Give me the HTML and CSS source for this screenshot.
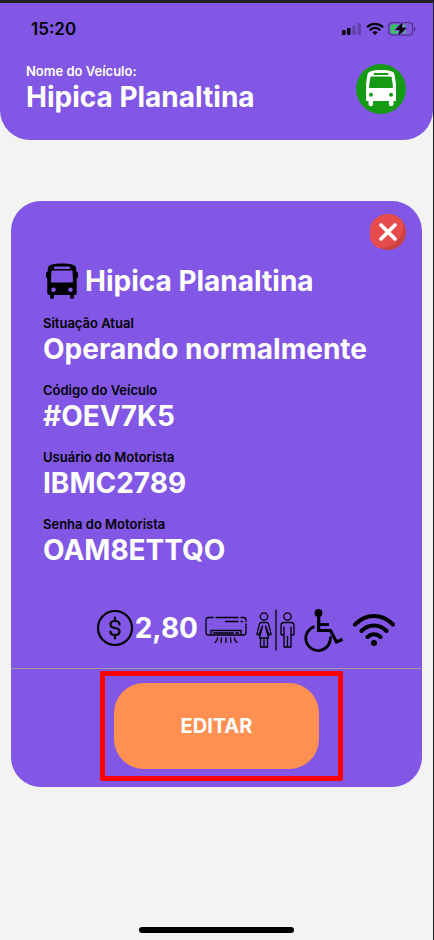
FILE: index.html
```html
<!DOCTYPE html>
<html lang="pt-BR">
<head>
<meta charset="utf-8">
<meta name="viewport" content="width=device-width, initial-scale=1">
<title>Hipica Planaltina</title>
<link rel="stylesheet" href="styles.css">
</head>
<body>
<div class="screen">
  <header class="header">
    <div class="status">
      <time class="clock">15:20</time>
      <svg class="status-icons" viewBox="0 0 74 14" aria-hidden="true">
        <rect x="0" y="8" width="3.6" height="5" rx="1"/>
        <rect x="5" y="6" width="3.6" height="7" rx="1"/>
        <rect x="10.200" y="3.500" width="3.600" height="9.500" rx="1" opacity=".25"/>
        <rect x="15.400" y="1" width="3.600" height="12" rx="1" opacity=".25"/>
        <g fill="none" stroke="#000" stroke-width="2.300">
          <path d="M25 5.200C29.500 .7 36.500 .7 41 5.200"/>
          <path d="M27.800 8.200C30.800 5.200 35.200 5.200 38.200 8.200"/>
        </g>
        <path d="M33 13 30.300 10.200C31.800 8.800 34.200 8.800 35.700 10.200Z"/>
        <rect x="46.700" y=".7" width="24" height="12.400" rx="3.500" fill="none" stroke="#000" stroke-opacity=".4" stroke-width="1.200"/>
        <path d="M72 5v4.200c2-.8 2-3.400 0-4.200Z" opacity=".45"/>
        <rect x="48.500" y="2.500" width="15.500" height="9" rx="2" fill="#34c759"/>
        <path class="bolt" d="M60.700 0 53.200 8h4.500L56.300 14 64.600 5.800h-4.800Z"/>
      </svg>
    </div>
    <div class="vehicle">
      <div>
        <p class="label">Nome do Veículo:</p>
        <h1 class="value">Hipica Planaltina</h1>
      </div>
      <svg class="avatar" viewBox="0 0 50 50" aria-hidden="true">
        <circle cx="25" cy="25" r="25" fill="#159a15"/>
        <path fill="#fff" fill-rule="evenodd" d="M10 37V20l1.500-9.500C12 7.500 16 6 25 6s13 1.500 13.500 4.500L40 20v17h-2.500v3a2.300 2.300 0 0 1-4.600 0v-3H17.100v3a2.300 2.300 0 0 1-4.600 0v-3ZM18.500 9a1 1 0 0 0 0 2h13a1 1 0 0 0 0-2ZM15.500 12.500q-1 0-1.200 1L13 22.500q-.1 1.500 1.200 1.500h21.600q1.300 0 1.200-1.500l-1.300-9q-.2-1-1.200-1ZM15 28.800a2 2 0 1 0 0 4 2 2 0 0 0 0-4ZM35 28.800a2 2 0 1 0 0 4 2 2 0 0 0 0-4Z"/>
      </svg>
    </div>
  </header>

  <main class="main">
    <section class="card">
      <button class="close" type="button" aria-label="Fechar">
        <svg viewBox="0 0 36 36" aria-hidden="true">
          <circle cx="18" cy="18" r="18" fill="#cb4141"/>
          <path d="M18 0a18 18 0 0 1 14.500 7.300C36 19 27 35 8 34A18 18 0 0 1 8 3 18 18 0 0 1 18 0Z" fill="#e64c4c"/>
          <path d="M11 11 25 25M25 11 11 25" stroke="#fff" stroke-width="3.800" stroke-linecap="round"/>
        </svg>
      </button>

      <div class="details">
        <div class="title">
          <svg class="bus" viewBox="0 0 34 36" aria-hidden="true">
            <path fill-rule="evenodd" d="M2.500 9 3 5C3.500 1.500 9 .5 17 .5S30.500 1.500 31 5l.5 4c1 0 1.500.6 1.500 1.500v3c0 1-.5 1.700-1.300 1.700V30q0 2-2 2H29v2a2 2 0 0 1-4 0v-2H9v2a2 2 0 0 1-4 0v-2h-.7q-2 0-2-2V15.200C1.500 15.200 1 14.500 1 13.500v-3C1 9.600 1.500 9 2.500 9ZM10 3.500q-1 0-1 1V6h16V4.500q0-1-1-1ZM7.500 7.500q-1 0-1.100 1L6 18.500q0 1 1 1h20q1 0 1-1l-.4-10q-.1-1-1.100-1ZM8.500 24.500a2.300 2.300 0 1 0 0 4.600 2.300 2.300 0 0 0 0-4.600ZM25.500 24.500a2.300 2.300 0 1 0 0 4.600 2.300 2.300 0 0 0 0-4.600Z"/>
          </svg>
          <h2 class="value">Hipica Planaltina</h2>
        </div>
        <dl class="fields">
          <div><dt class="label">Situação Atual</dt><dd class="value">Operando normalmente</dd></div>
          <div><dt class="label">Código do Veículo</dt><dd class="value">#OEV7K5</dd></div>
          <div><dt class="label">Usuário do Motorista</dt><dd class="value">IBMC2789</dd></div>
          <div><dt class="label">Senha do Motorista</dt><dd class="value">OAM8ETTQO</dd></div>
        </dl>
      </div>

      <div class="amenities">
        <div class="fare">
          <svg class="coin" viewBox="0 0 38 38" fill="none" stroke="#000" stroke-width="2.200" stroke-linecap="round" aria-hidden="true">
            <circle cx="19" cy="19" r="17"/>
            <path d="M19 8.500v3.500M19 26v3.500M23.500 15.500c0-2.200-1.800-3.500-4.500-3.500s-4.500 1.300-4.500 3.500S16.300 18.700 19 19s4.500 1.300 4.500 3.500S21.700 26 19 26s-4.500-1.300-4.500-3.500"/>
          </svg>
          <span class="value">2,80</span>
        </div>
        <svg class="ac" viewBox="0 0 42 28" fill="none" stroke="#000" stroke-width="1.300" stroke-linecap="round" aria-label="Ar-condicionado" role="img">
          <path d="M8 1.500H3.500Q1 1.500 1 4v12.500Q1 19 3.500 19h35Q41 19 41 16.500V8M11 1.500h22M36 1.500h2.500Q41 1.500 41 4v1.500M20.500 5.500H33M36 5.500h1.500M6 19v-4.500h30V19M8.500 17h20M31 17h2.500M12.500 22c0 2-1 3.500-2.500 4.500M16.500 22l-.5 4.500M21 22v4.500M25.500 22l.5 4.500M29.500 22c0 2 1 3.500 2.500 4.500"/>
        </svg>
        <svg class="wc" viewBox="0 0 39 42" fill="none" stroke="#000" stroke-width="1.300" stroke-linejoin="round" aria-label="Banheiro" role="img">
          <circle cx="8" cy="7.500" r="3.700"/>
          <path d="M5 13.500h6q1 0 1.400 1.200l2.600 10q.2 1.300-1 1.300l-1-.5L9.500 17 12.500 29h-9L6.500 17 3 25.500l-1 .5q-1.200 0-1-1.300l2.600-10Q4 13.500 5 13.500ZM4.500 29v9h7v-9M8 29v9"/>
          <path d="M20 .5v41"/>
          <circle cx="31.500" cy="7.500" r="3.700"/>
          <path d="M28 13.500h7q3 0 3 3V25q0 1-1 1h-2v12h-7V26h-2q-1 0-1-1v-8.500q0-3 3-3ZM28 17.500V26M35 17.500V26M31.500 27v11"/>
        </svg>
        <svg class="wheelchair" viewBox="0 0 40 44" fill="none" stroke="#000" stroke-width="3" aria-label="Acessível para cadeirantes" role="img">
          <circle cx="14.500" cy="5" r="3.900" fill="#000" stroke="none"/>
          <path d="M14.700 7v15.500h11.800L32.500 34l6-2.700" stroke-width="3.200"/>
          <path d="M15 16.500h10" stroke-width="2.800"/>
          <path d="M10.500 18.500A12.300 12.300 0 1 0 26.300 28.500" stroke-width="2.800"/>
        </svg>
        <svg class="wifi" viewBox="0 0 42 34" fill="none" stroke="#000" stroke-width="4" stroke-linecap="round" aria-label="Wi-Fi" role="img">
          <path d="M2 11.500C13 .2 29 .2 40 11.500M8.500 18C15.500 10.800 26.500 10.800 33.500 18M14.500 24C18.300 20.200 23.700 20.200 27.500 24"/>
          <circle cx="21" cy="30" r="3" fill="#000" stroke="none"/>
        </svg>
      </div>

      <footer class="actions">
        <div class="edit-area"><button class="edit" type="button">EDITAR</button></div>
      </footer>
    </section>
  </main>
  <div class="home-bar"></div>
</div>
</body>
</html>
```
FILE: styles.css
```css
* {
  box-sizing: border-box;
}

body,
h1,
h2,
p,
dl,
dd {
  margin: 0;
}

body {
  font-family: Inter, "Liberation Sans", sans-serif;
  color: #000;
  background: #f3f3f1;
}

svg {
  display: block;
  flex-shrink: 0;
}

.screen {
  display: flex;
  flex-direction: column;
  min-height: 100vh;
  border-top: 3px solid #222;
  border-right: 1px solid #222;
}

.header {
  padding: 16px 27px 26px 26px;
  background: #8257e5;
  border-radius: 0 0 30px 30px;
}

.status {
  display: flex;
  align-items: center;
  justify-content: space-between;
  padding-left: 5px;
  height: 20px;
}

.clock {
  font-size: 17px;
  font-weight: 600;
}

.status-icons {
  width: 74px;
  height: 14px;
  margin-right: -10px;
}

.bolt {
  stroke: #8257e5;
  stroke-width: 2;
  paint-order: stroke;
}

.vehicle {
  display: flex;
  align-items: center;
  justify-content: space-between;
  margin-top: 24px;
}

.avatar {
  width: 50px;
  height: 50px;
}

.label {
  font-size: 13px;
  line-height: 17px;
  font-weight: 600;
}

.header .label {
  color: #fff;
}

.value {
  font-size: 28px;
  line-height: 34px;
  font-weight: 700;
  color: #fff;
}

.main {
  flex: 1;
  padding: 61px 11px 24px;
}

.card {
  display: flex;
  flex-direction: column;
  background: #8257e5;
  border-radius: 30px;
}

.close {
  align-self: flex-end;
  width: 36px;
  height: 36px;
  margin: 13px 16px 0 0;
  padding: 0;
  border: 0;
  border-radius: 50%;
  background: none;
}

.details {
  padding: 13px 32px 0;
}

.title {
  display: flex;
  align-items: center;
  gap: 6px;
  padding-left: 2px;
}

.bus {
  width: 34px;
  height: 36px;
}

.fields {
  display: grid;
  gap: 16px;
  margin-top: 16px;
}

.amenities {
  display: flex;
  align-items: center;
  justify-content: flex-end;
  gap: 9px;
  height: 44px;
  margin: 41px 27px 16px;
}

.fare {
  display: flex;
  align-items: center;
  gap: 1px;
  margin-right: -2px;
  padding-bottom: 4px;
}

.coin {
  width: 38px;
  height: 38px;
}

.ac {
  width: 42px;
  height: 28px;
}

.wc {
  width: 39px;
  height: 42px;
}

.wheelchair {
  width: 40px;
  height: 44px;
}

.wifi {
  width: 42px;
  height: 34px;
}

.actions {
  display: flex;
  justify-content: center;
  padding: 14px 0 18px;
  border-top: 1px solid #a09aa8;
}

.edit-area {
  position: relative;
  width: 50%;
}

.edit-area::after {
  content: "";
  position: absolute;
  inset: -12px -24px -12px -14px;
  border: 5px solid #f00;
  border-radius: 2px;
  pointer-events: none;
}

.edit {
  display: block;
  width: 100%;
  padding: 30px 16px;
  border: 0;
  border-radius: 30px;
  background: #ff9052;
  color: #fff;
  font-family: inherit;
  font-size: 20px;
  line-height: 26px;
  font-weight: 700;
}

.home-bar {
  align-self: center;
  width: 155px;
  height: 6px;
  margin-bottom: 7px;
  border-radius: 3px;
  background: #000;
}
```
